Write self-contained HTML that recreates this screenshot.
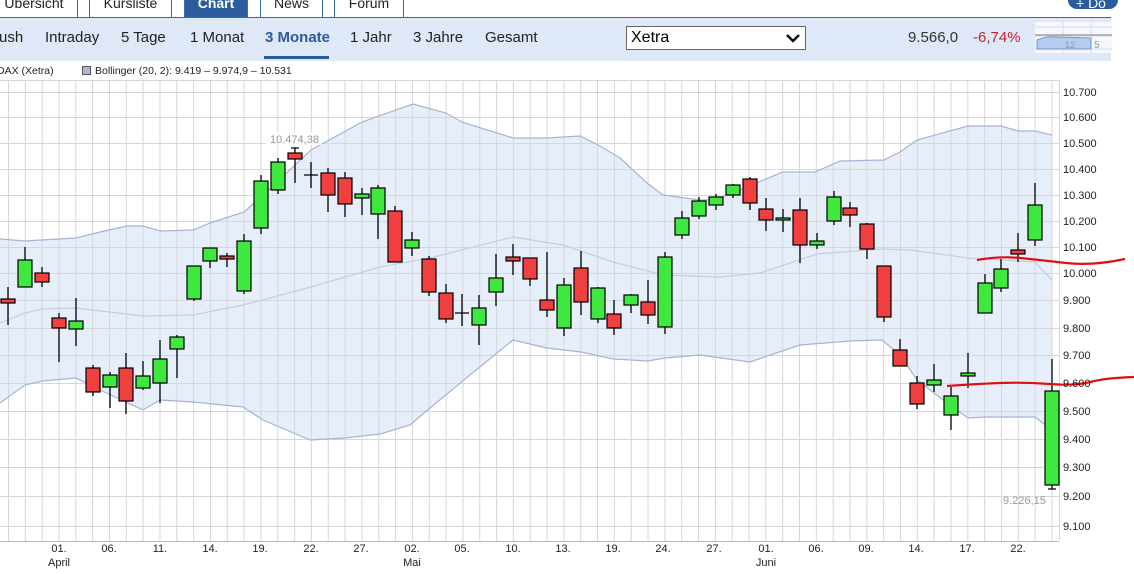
<!DOCTYPE html>
<html><head><meta charset="utf-8"><style>
*{margin:0;padding:0;box-sizing:border-box}
body{width:1134px;height:574px;overflow:hidden;background:#fff;font-family:"Liberation Sans",Arial,sans-serif;position:relative}
.tab{position:absolute;top:-6px;height:24px;border:1px solid #3a6aa8;border-bottom:none;background:#fff;font-size:14px;color:#222;text-align:center;line-height:16px}
.sub{position:absolute;top:18px;left:0;width:1111px;height:43px;background:#dfe8f6}
.nav{position:absolute;top:29px;font-size:15px;color:#222}
svg text{font-family:"Liberation Sans",Arial,sans-serif}
</style></head><body>
<div class="tab" style="left:-10px;width:88px">Übersicht</div>
<div class="tab" style="left:89px;width:83px">Kursliste</div>
<div class="tab" style="left:184px;width:64px;background:#2b5c9e;color:#fff;font-weight:bold">Chart</div>
<div class="tab" style="left:260px;width:63px">News</div>
<div class="tab" style="left:334px;width:70px">Forum</div>
<div style="position:absolute;left:0;top:17px;width:1111px;height:2px;background:#3a6aa8"></div>
<div style="position:absolute;left:1068px;top:-10px;width:50px;height:19px;border-radius:9px;background:#2b5c9e;color:#fff;font-size:14px;padding-left:8px;line-height:26px">+ Do</div>
<div class="sub"></div>
<div class="nav" style="left:-1px">ush</div>
<div class="nav" style="left:45px">Intraday</div>
<div class="nav" style="left:121px">5 Tage</div>
<div class="nav" style="left:190px">1 Monat</div>
<div class="nav" style="left:265px;font-weight:bold;color:#2d5b9b">3 Monate</div>
<div style="position:absolute;left:264px;top:56px;width:65px;height:3px;background:#2d5b9b"></div>
<div class="nav" style="left:350px">1 Jahr</div>
<div class="nav" style="left:413px">3 Jahre</div>
<div class="nav" style="left:485px">Gesamt</div>
<div style="position:absolute;left:626px;top:26px;width:180px;height:24px;background:#fff;border:1px solid #666;font-size:16px;padding-left:4px;line-height:22px">Xetra
<svg style="position:absolute;right:5px;top:6px" width="14" height="10"><path d="M1 2 L7 8 L13 2" stroke="#111" stroke-width="2.5" fill="none"/></svg></div>
<div style="position:absolute;left:908px;top:29px;font-size:15px;color:#333">9.566,0</div>
<div style="position:absolute;left:973px;top:29px;font-size:15px;color:#c0272d">-6,74%</div>
<svg style="position:absolute;left:1035px;top:22px" width="77" height="31"><rect width="77" height="31" fill="#f4f7fc"/><path d="M0 5H77M0 14H77M0 27H77M28 0V31M56 0V31" stroke="#ddd"/><path d="M0 13H77" stroke="#555" stroke-width="0.8"/><path d="M2 27V18Q12 14 22 15L56 16V27Z" fill="#b5ccee" stroke="#6f94cc"/><text x="59" y="26" font-size="10" fill="#999">5</text><text x="30" y="26" font-size="9" fill="#999">12</text></svg>
<div style="position:absolute;left:-3px;top:65px;font-size:10.5px;color:#222">DAX (Xetra)</div>
<div style="position:absolute;left:82px;top:66px;width:9px;height:9px;background:#a7b8dc;border:1px solid #555"></div>
<div style="position:absolute;left:95px;top:65px;font-size:10.5px;color:#222">Bollinger (20, 2): 9.419 – 9.974,9 – 10.531</div>
<svg style="position:absolute;left:0;top:0" width="1134" height="574">
<defs><pattern id="v" x="8" y="0" width="16.83" height="574" patternUnits="userSpaceOnUse"><path d="M0.5 0V574" stroke="#d6d6dc"/></pattern></defs>
<path fill="#e6eefa" d="M0 239L25 241L76 238L100 232L127 226L143 226L160 231L193 230L210 223L244 212L261 197L311 150L362 122L413 104L446 113L462 122L513 138L547 138L580 136L600 146L620 158L647 183L663 195L700 200L715 200L783 172L815 172L840 161L884 160L900 152L917 140L968 126L1001 126L1018 131L1035 131L1052 135L1052 430L1035 417L985 417L968 418L951 406L917 380L900 355L882 340L850 341L800 345L750 362L700 355L665 358L648 361L613 359L581 352L547 348L513 340L470 375L430 408L410 425L380 434L345 438L310 440L263 420L243 407L193 402L160 400L143 410L100 390L76 378L42 381L25 385L0 403Z"/>
<rect x="0" y="80" width="1059" height="461" fill="url(#v)"/>
<g stroke="#d6d6dc"><path d="M0 80.5H1059M0 92.5H1059M0 117.5H1059M0 143.5H1059M0 169.5H1059M0 195.5H1059M0 221.5H1059M0 247.5H1059M0 273.5H1059M0 300.5H1059M0 328.5H1059M0 355.5H1059M0 383.5H1059M0 411.5H1059M0 439.5H1059M0 467.5H1059M0 496.5H1059M0 526.5H1059M1059.5 80V541"/></g>
<path d="M0 541.5H1059" stroke="#bbb"/>
<g fill="none" stroke="#a6b4d4" stroke-width="1.2">
<path d="M0 239L25 241L76 238L100 232L127 226L143 226L160 231L193 230L210 223L244 212L261 197L311 150L362 122L413 104L446 113L462 122L513 138L547 138L580 136L600 146L620 158L647 183L663 195L700 200L715 200L783 172L815 172L840 161L884 160L900 152L917 140L968 126L1001 126L1018 131L1035 131L1052 135"/>
<path d="M0 403L25 385L42 381L76 378L100 390L143 410L160 400L193 402L243 407L263 420L310 440L345 438L380 434L410 425L430 408L470 375L513 340L547 348L581 352L613 359L648 361L665 358L700 355L750 362L800 345L850 341L882 340L900 355L917 380L951 406L968 418L985 417L1035 417L1052 430"/>
<path stroke="#c3cee6" d="M0 323L25 313L42 309L76 308L143 316L193 315L243 305L300 290L380 267L430 258L513 237L563 245L613 262L663 275L720 277L760 273L817 254L880 249L910 250L968 258L1035 262L1052 280"/>
</g>
<g stroke="#000" stroke-width="1.3">
<path d="M8 287V325M25 247V287M42 267V287M59 313V362M76 298V346M93 365V396M110 372V408M126 353V414M143 361V390M160 340V403M177 335V378M194 266V301M210 248V268M227 253V267M244 234V294M261 175V234M278 158V194M295 148V183M311 162V188M328 168V212M345 172V217M362 188V215M378 185V239M395 206V262M412 232V256M429 256V296M446 284V323M462 294V326M479 295V345M496 254V306M513 244V275M530 258V286M547 252V317M564 278V336M581 251V315M598 287V323M614 300V335M631 294V313M648 280V324M665 252V334M682 211V239M699 197V219M716 194V210M733 184V198M750 177V210M766 198V231M783 209V232M800 198V263M817 233V249M834 191V225M850 202V227M867 223V259M884 266V322M900 339V366M917 376V409M934 364V392M951 387V430M968 353V388M985 274V313M1001 259V292M1018 233V262M1035 183V246M1052 359V489M291 148H299M1048 489H1056M304 175H318M455 313H469"/>
</g>
<g stroke="#000" stroke-width="1.2" fill="#3fe83f">
<rect x="18" y="260" width="14" height="27"/><rect x="69" y="321" width="14" height="8"/><rect x="103" y="375" width="14" height="12"/><rect x="136" y="376" width="14" height="12"/><rect x="153" y="359" width="14" height="24"/><rect x="170" y="337" width="14" height="12"/><rect x="187" y="266" width="14" height="33"/><rect x="203" y="248" width="14" height="13"/><rect x="237" y="241" width="14" height="50"/><rect x="254" y="181" width="14" height="47"/><rect x="271" y="162" width="14" height="28"/><rect x="355" y="194" width="14" height="4"/><rect x="371" y="188" width="14" height="26"/><rect x="405" y="240" width="14" height="8"/><rect x="472" y="308" width="14" height="17"/><rect x="489" y="278" width="14" height="14"/><rect x="557" y="285" width="14" height="43"/><rect x="591" y="288" width="14" height="31"/><rect x="624" y="295" width="14" height="10"/><rect x="658" y="257" width="14" height="70"/><rect x="675" y="218" width="14" height="17"/><rect x="692" y="201" width="14" height="15"/><rect x="709" y="197" width="14" height="8"/><rect x="726" y="185" width="14" height="10"/><rect x="776" y="218" width="14" height="2"/><rect x="810" y="241" width="14" height="4"/><rect x="827" y="197" width="14" height="24"/><rect x="927" y="380" width="14" height="5"/><rect x="944" y="396" width="14" height="19"/><rect x="961" y="373" width="14" height="3"/><rect x="978" y="283" width="14" height="30"/><rect x="994" y="269" width="14" height="19"/><rect x="1028" y="205" width="14" height="35"/><rect x="1045" y="391" width="14" height="94"/>
</g>
<g stroke="#000" stroke-width="1.2" fill="#ef3f3f">
<rect x="1" y="299" width="14" height="4"/><rect x="35" y="273" width="14" height="9"/><rect x="52" y="318" width="14" height="10"/><rect x="86" y="368" width="14" height="24"/><rect x="119" y="368" width="14" height="33"/><rect x="220" y="256" width="14" height="3"/><rect x="288" y="153" width="14" height="6"/><rect x="321" y="173" width="14" height="22"/><rect x="338" y="178" width="14" height="26"/><rect x="388" y="211" width="14" height="51"/><rect x="422" y="259" width="14" height="33"/><rect x="439" y="293" width="14" height="26"/><rect x="506" y="257" width="14" height="4"/><rect x="523" y="258" width="14" height="21"/><rect x="540" y="300" width="14" height="10"/><rect x="574" y="268" width="14" height="34"/><rect x="607" y="314" width="14" height="14"/><rect x="641" y="302" width="14" height="13"/><rect x="743" y="179" width="14" height="24"/><rect x="759" y="209" width="14" height="11"/><rect x="793" y="210" width="14" height="35"/><rect x="843" y="208" width="14" height="7"/><rect x="860" y="224" width="14" height="25"/><rect x="877" y="266" width="14" height="51"/><rect x="893" y="350" width="14" height="16"/><rect x="910" y="383" width="14" height="21"/><rect x="1011" y="250" width="14" height="4"/>
</g>
<rect x="266" y="132" width="56" height="13" fill="#fff" fill-opacity="0.8"/>
<text x="270" y="143" font-size="11" fill="#999">10.474,38</text>
<text x="1003" y="504" font-size="11" fill="#999">9.226,15</text>
<g fill="none" stroke="#e01010" stroke-width="2.2">
<path d="M977 260Q1000 256 1020 258T1066 263T1125 259"/>
<path d="M947 386Q975 384 1000 383T1050 384T1090 382T1134 377"/>
</g>
<g font-size="11" fill="#222">
<text x="1063" y="96">10.700</text><text x="1063" y="121">10.600</text><text x="1063" y="147">10.500</text><text x="1063" y="173">10.400</text><text x="1063" y="199">10.300</text><text x="1063" y="225">10.200</text><text x="1063" y="251">10.100</text><text x="1063" y="277">10.000</text><text x="1063" y="304">9.900</text><text x="1063" y="332">9.800</text><text x="1063" y="359">9.700</text><text x="1063" y="387">9.600</text><text x="1063" y="415">9.500</text><text x="1063" y="443">9.400</text><text x="1063" y="471">9.300</text><text x="1063" y="500">9.200</text><text x="1063" y="530">9.100</text>
</g>
<g font-size="11" fill="#222" text-anchor="middle">
<text x="59" y="552">01.</text><text x="59" y="566">April</text><text x="109" y="552">06.</text><text x="160" y="552">11.</text><text x="210" y="552">14.</text><text x="260" y="552">19.</text><text x="311" y="552">22.</text><text x="361" y="552">27.</text><text x="412" y="552">02.</text><text x="412" y="566">Mai</text><text x="462" y="552">05.</text><text x="513" y="552">10.</text><text x="563" y="552">13.</text><text x="613" y="552">19.</text><text x="663" y="552">24.</text><text x="714" y="552">27.</text><text x="766" y="552">01.</text><text x="766" y="566">Juni</text><text x="816" y="552">06.</text><text x="866" y="552">09.</text><text x="916" y="552">14.</text><text x="967" y="552">17.</text><text x="1018" y="552">22.</text>
</g>
</svg>
</body></html>
